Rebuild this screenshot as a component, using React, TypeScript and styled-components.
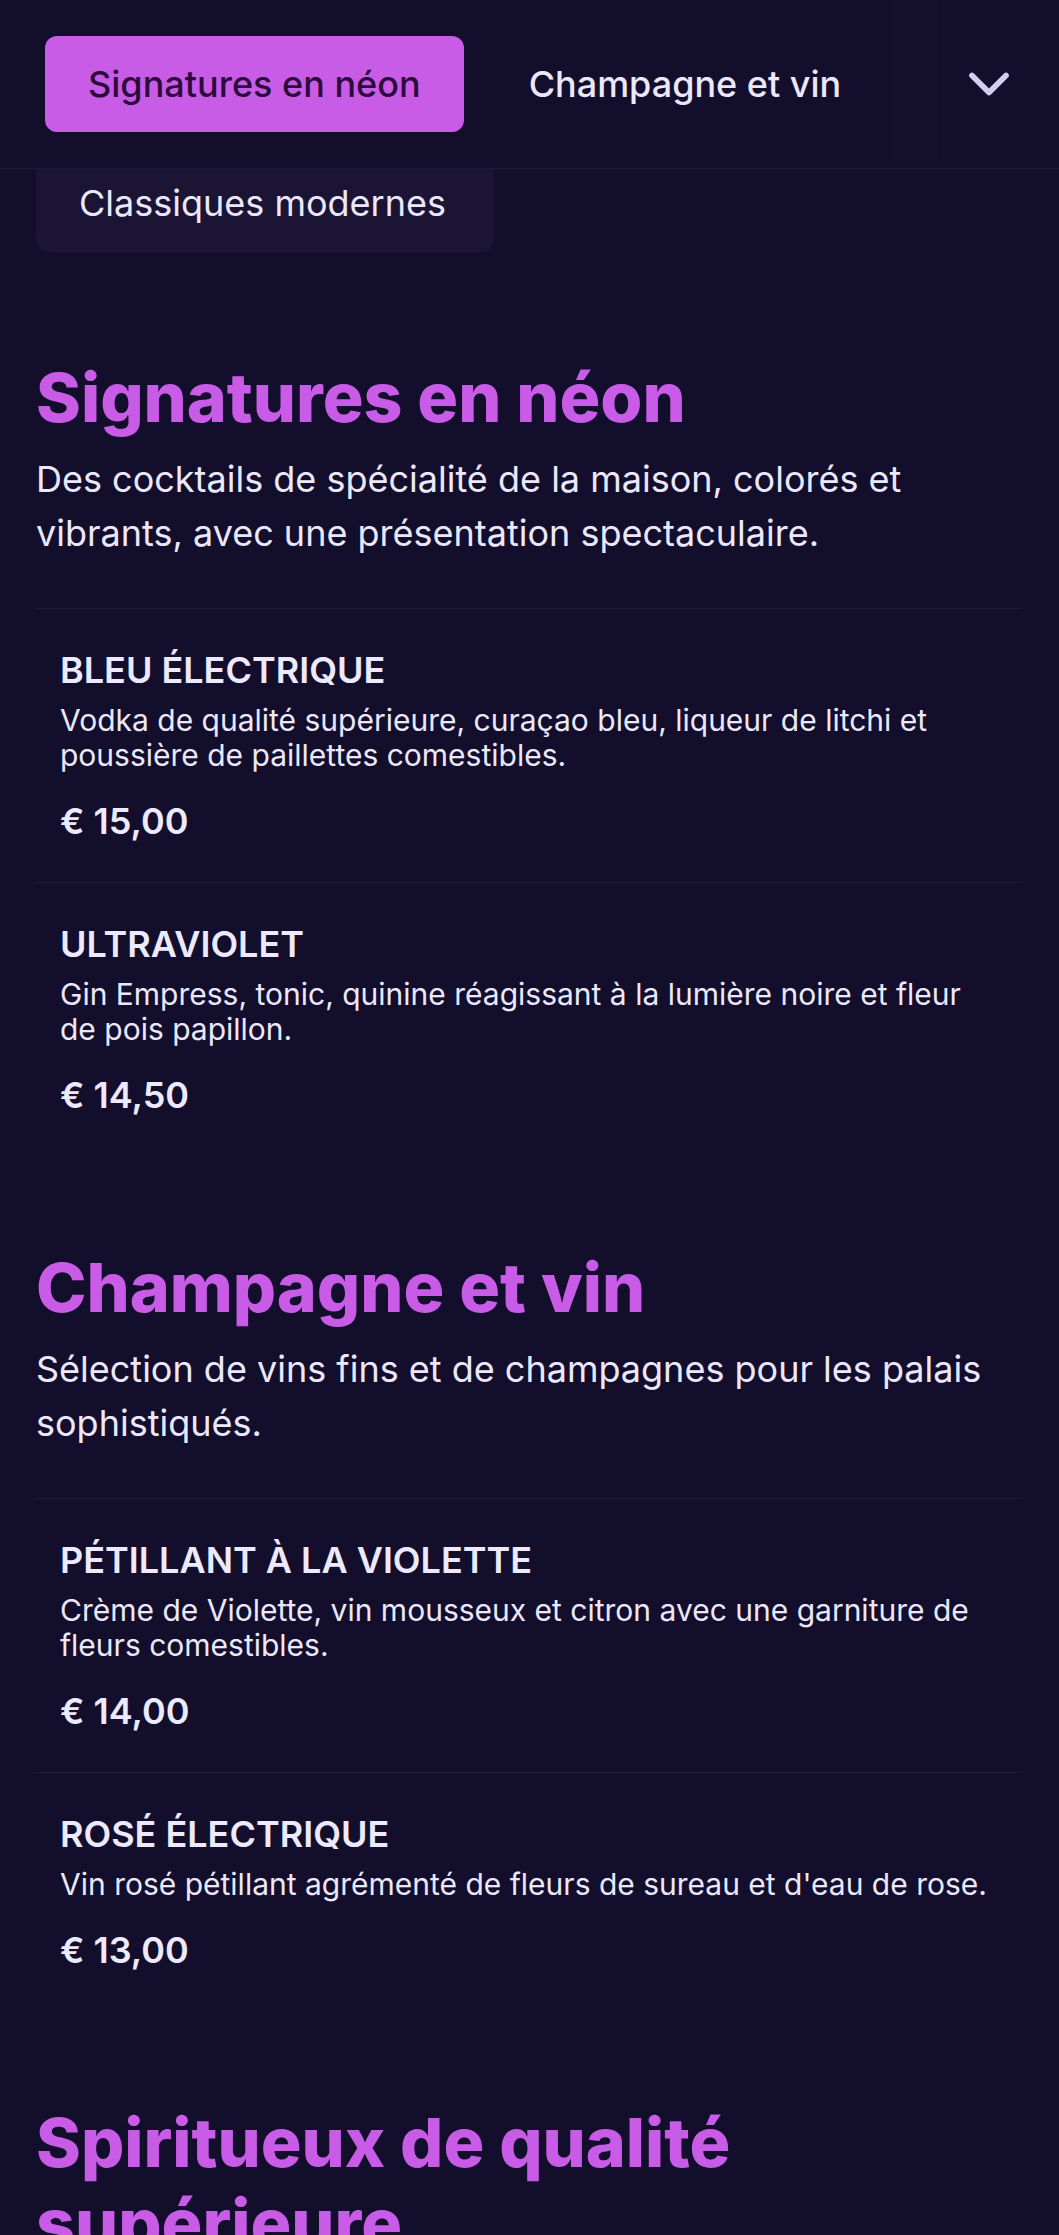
import styled, { createGlobalStyle } from 'styled-components';
import { ChevronDown } from 'lucide-react';

const GlobalStyle = createGlobalStyle`
  * {
    box-sizing: border-box;
  }
  body {
    margin: 0;
    background: #120e2b;
    color: #ede9fe;
    font-family: Inter, 'Noto Sans', sans-serif;
  }
`;

// header / tabs
const Header = styled.header`
  position: sticky;
  top: 0;
  z-index: 10;
  height: 169px;
  display: flex;
  align-items: center;
  padding: 0 36px 0 45px;
  background: #120e2b;
  border-bottom: 1px solid #1f1a3a;
`;

const TabRow = styled.nav`
  flex: 1;
  min-width: 0;
  display: flex;
  gap: 22px;
  overflow: hidden;
`;

const Tab = styled.button<{ $active?: boolean }>`
  flex-shrink: 0;
  height: 96px;
  padding: 0 43px;
  border: 0;
  border-radius: 12px;
  font-family: Inter, sans-serif;
  font-size: 36px;
  font-weight: 500;
  line-height: 54px;
  cursor: pointer;
  background: ${({ $active }) => ($active ? '#c95ce7' : 'transparent')};
  color: ${({ $active }) => ($active ? '#2a0b3c' : '#ece8fb')};
`;

const Fade = styled.div`
  position: absolute;
  top: 0;
  left: 823px;
  width: 114px;
  height: 160px;
  background: linear-gradient(90deg, rgba(255, 255, 255, 0), rgba(255, 255, 255, 0.012));
  pointer-events: none;
`;

const MoreButton = styled.button`
  flex-shrink: 0;
  width: 68px;
  height: 68px;
  margin-left: 110px;
  padding: 0;
  border: 0;
  background: transparent;
  color: #d4cdef;
  display: flex;
  align-items: center;
  justify-content: center;
  cursor: pointer;
`;

const Dropdown = styled.div`
  position: absolute;
  top: calc(100% + 1px);
  left: 36px;
  width: 458px;
  height: 84px;
  padding: 7px 43px 0;
  background: #1b1434;
  border-radius: 0 0 14px 14px;
`;

const DropdownItem = styled.div`
  font-size: 36px;
  font-weight: 400;
  line-height: 54px;
  color: #ece8fb;
`;

// menu content
const Main = styled.main`
  display: flex;
  flex-direction: column;
  gap: 91px;
  padding: 188px 36px 200px;
`;

const Section = styled.section`
  display: flex;
  flex-direction: column;
`;

const SectionTitle = styled.h2`
  margin: 0 0 14px;
  font-family: Inter, sans-serif;
  font-size: 68px;
  font-weight: 800;
  line-height: 81px;
  color: #c95ce7;
`;

const SectionText = styled.p`
  margin: 0 0 48px;
  font-size: 36px;
  line-height: 54px;
  color: #ece8fb;
`;

const Item = styled.article`
  padding: 38px 32px 34px 24px;
  border-top: 1px solid #1f1a3a;
`;

const ItemName = styled.h3`
  margin: 0;
  font-size: 36px;
  font-weight: 600;
  line-height: 46px;
  color: #ede9fe;
`;

const ItemText = styled.p`
  margin: 10px 0 0;
  font-size: 30px;
  line-height: 35px;
  color: #ece8fb;
`;

const Price = styled.div`
  margin-top: 21px;
  font-size: 36px;
  font-weight: 600;
  line-height: 54px;
  color: #ede9fe;
`;

type Drink = { name: string; text: string; price: string };
type Category = { title: string; text: string; drinks: Drink[] };

const menu: Category[] = [
  {
    title: 'Signatures en néon',
    text: 'Des cocktails de spécialité de la maison, colorés et vibrants, avec une présentation spectaculaire.',
    drinks: [
      {
        name: 'BLEU ÉLECTRIQUE',
        text: 'Vodka de qualité supérieure, curaçao bleu, liqueur de litchi et poussière de paillettes comestibles.',
        price: '€ 15,00',
      },
      {
        name: 'ULTRAVIOLET',
        text: 'Gin Empress, tonic, quinine réagissant à la lumière noire et fleur de pois papillon.',
        price: '€ 14,50',
      },
    ],
  },
  {
    title: 'Champagne et vin',
    text: 'Sélection de vins fins et de champagnes pour les palais sophistiqués.',
    drinks: [
      {
        name: 'PÉTILLANT À LA VIOLETTE',
        text: 'Crème de Violette, vin mousseux et citron avec une garniture de fleurs comestibles.',
        price: '€ 14,00',
      },
      {
        name: 'ROSÉ ÉLECTRIQUE',
        text: "Vin rosé pétillant agrémenté de fleurs de sureau et d'eau de rose.",
        price: '€ 13,00',
      },
    ],
  },
  {
    title: 'Spiritueux de qualité supérieure',
    text: 'Whiskies, rhums et cognacs d’exception, servis purs ou sur glace.',
    drinks: [
      {
        name: 'WHISKY FUMÉ',
        text: 'Single malt tourbé, servi sur un glaçon sphérique.',
        price: '€ 18,00',
      },
    ],
  },
];

export default function App() {
  return (
    <>
      <GlobalStyle />
      <Header>
        <TabRow>
          <Tab $active>Signatures en néon</Tab>
          <Tab>Champagne et vin</Tab>
        </TabRow>
        <Fade />
        <MoreButton aria-label="Plus de catégories">
          <ChevronDown size={68} strokeWidth={2} />
        </MoreButton>
        <Dropdown>
          <DropdownItem>Classiques modernes</DropdownItem>
        </Dropdown>
      </Header>
      <Main>
        {menu.map((cat) => (
          <Section key={cat.title}>
            <SectionTitle>{cat.title}</SectionTitle>
            <SectionText>{cat.text}</SectionText>
            {cat.drinks.map((d) => (
              <Item key={d.name}>
                <ItemName>{d.name}</ItemName>
                <ItemText>{d.text}</ItemText>
                <Price>{d.price}</Price>
              </Item>
            ))}
          </Section>
        ))}
      </Main>
    </>
  );
}
